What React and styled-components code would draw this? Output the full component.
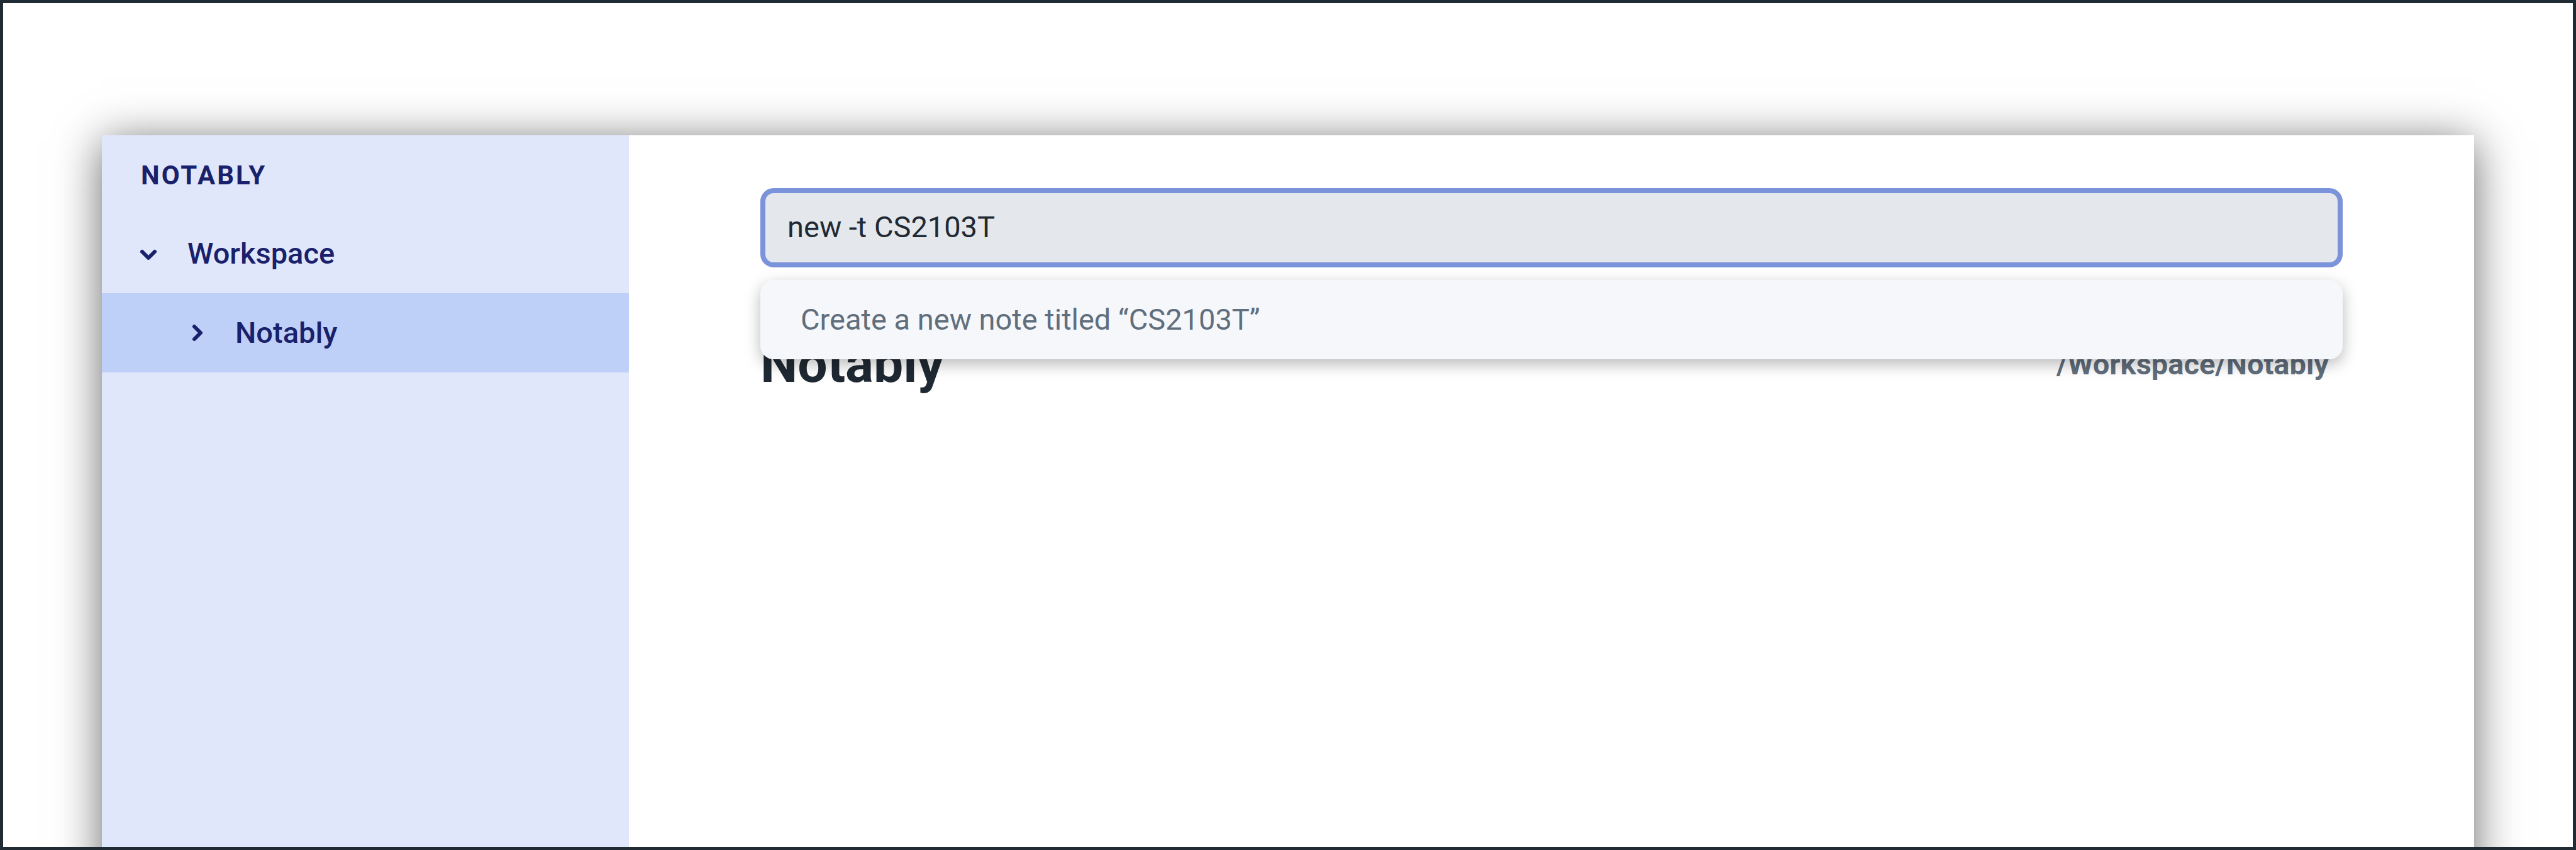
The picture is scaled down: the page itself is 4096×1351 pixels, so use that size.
import React, { useState } from "react";
import styled, { createGlobalStyle } from "styled-components";

const GlobalStyle = createGlobalStyle`
  *, *::before, *::after { box-sizing: border-box; }
  body { margin: 0; background: #fff; font-family: Roboto, "Liberation Sans", sans-serif; }
`;

const Frame = styled.div`
  display: flex;
  height: 100vh;
  padding: 210px 157px 0;
  border: 5px solid #202b34;
  background: #fff;
  overflow: hidden;
`;

const Window = styled.div`
  display: flex;
  flex: 1;
  margin-bottom: -120px;
  background: #fff;
  box-shadow: 0 10px 68px rgba(0, 0, 0, 0.59);
`;

const Sidebar = styled.nav`
  flex: 0 0 838px;
  background: #e1e7fa;
  color: #19216c;
`;

const Brand = styled.h2`
  display: flex;
  align-items: center;
  height: 125px;
  margin: 0;
  padding: 2px 62px 0;
  font-size: 42px;
  font-weight: 700;
  letter-spacing: 3px;
`;

const TreeItem = styled.button`
  display: flex;
  align-items: center;
  gap: 40px;
  width: 100%;
  height: 126px;
  border: 0;
  padding: 0 52px 0 ${({ $level }) => 52 + $level * 76}px;
  background: ${({ $active }) => ($active ? "#bed0f7" : "transparent")};
  color: inherit;
  font: 500 47px/56px Roboto, "Liberation Sans", sans-serif;
  text-align: left;
`;

const ChevronIcon = styled.svg`
  flex: none;
  width: 44px;
  height: 44px;
  fill: none;
  stroke: currentColor;
  stroke-width: 6;
  stroke-linecap: round;
  stroke-linejoin: round;
  transform: rotate(${({ $open }) => ($open ? 90 : 0)}deg);
`;

const Main = styled.main`
  flex: 1;
  padding: 84px 209px 0;
`;

const Command = styled.form`
  position: relative;
`;

const CommandInput = styled.input`
  display: block;
  width: 100%;
  height: 126px;
  padding: 0 35px 4px;
  border: 8px solid #7b93db;
  border-radius: 21px;
  outline: 0;
  background: #e4e7eb;
  color: #1f2933;
  font: 400 47px/56px Roboto, "Liberation Sans", sans-serif;
`;

const Suggestions = styled.ul`
  position: absolute;
  top: 100%;
  left: 0;
  right: 0;
  margin: 20px 0 0;
  padding: 0;
  list-style: none;
  border-radius: 21px;
  background: #f5f7fb;
  box-shadow: 0 8px 25px rgba(0, 0, 0, 0.28);
`;

const Suggestion = styled.li`
  display: flex;
  align-items: center;
  height: 126px;
  padding: 0 64px;
  color: #616e7c;
  font-size: 47px;
  line-height: 56px;
`;

const NoteHeader = styled.header`
  display: flex;
  justify-content: space-between;
  align-items: center;
  height: 100px;
  margin-top: 103px;
  padding-right: 22px;
`;

const Title = styled.h1`
  margin: 0;
  color: #1f2933;
  font-size: 84px;
  font-weight: 700;
`;

const Path = styled.span`
  color: #616e7c;
  font-size: 47px;
  font-weight: 700;
`;

function Chevron({ open }) {
  return (
    <ChevronIcon viewBox="0 0 44 44" $open={open} aria-hidden="true">
      <path d="M19 12 29 22 19 32" />
    </ChevronIcon>
  );
}

export default function App() {
  const [command, setCommand] = useState("new -t CS2103T");
  return (
    <>
      <GlobalStyle />
      <Frame>
        <Window>
          <Sidebar aria-label="Notes">
            <Brand>NOTABLY</Brand>
            <TreeItem type="button" $level={0}>
              <Chevron open />
              Workspace
            </TreeItem>
            <TreeItem type="button" $level={1} $active>
              <Chevron />
              Notably
            </TreeItem>
          </Sidebar>
          <Main>
            <Command onSubmit={(e) => e.preventDefault()}>
              <CommandInput
                aria-label="Command"
                value={command}
                onChange={(e) => setCommand(e.target.value)}
              />
              <Suggestions>
                <Suggestion>Create a new note titled “CS2103T”</Suggestion>
              </Suggestions>
            </Command>
            <NoteHeader>
              <Title>Notably</Title>
              <Path>/Workspace/Notably</Path>
            </NoteHeader>
          </Main>
        </Window>
      </Frame>
    </>
  );
}
